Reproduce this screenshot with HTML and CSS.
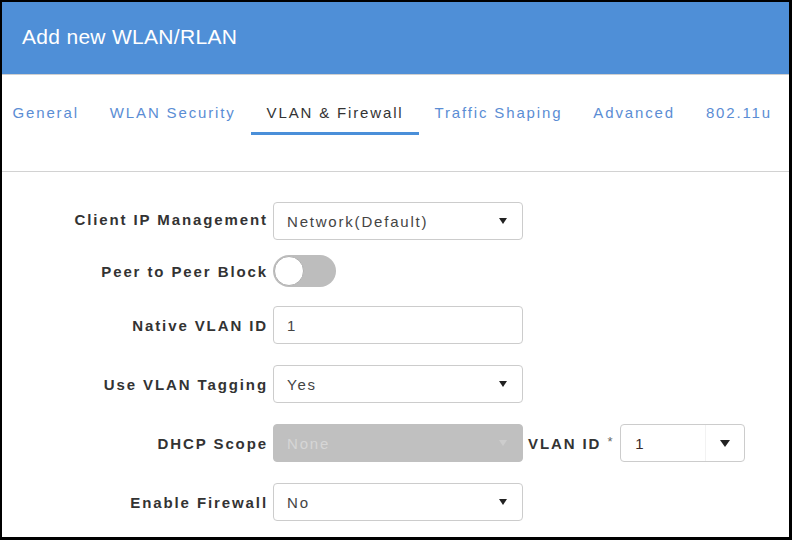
FILE: index.html
```html
<!DOCTYPE html>
<html lang="en">

<head>
    <meta charset="UTF-8" />
    <meta name="viewport" content="width=device-width, initial-scale=1" />
    <title>Add new WLAN/RLAN</title>
    <link rel="stylesheet" href="styles.css">
</head>

<body>
    <div class="dialog" role="dialog" aria-label="Add new WLAN/RLAN">
        <div class="dialog-header">
            <h2>Add new WLAN/RLAN</h2>
        </div>

        <nav class="tabs">
            <a href="#" class="tab">General</a>
            <a href="#" class="tab">WLAN Security</a>
            <a href="#" class="tab active">VLAN &amp; Firewall</a>
            <a href="#" class="tab">Traffic Shaping</a>
            <a href="#" class="tab">Advanced</a>
            <a href="#" class="tab">802.11u</a>
        </nav>

        <form class="form" onsubmit="return false">
            <div class="field field-first">
                <label class="field-label">Client IP Management</label>
                <div class="select">
                    <span>Network(Default)</span>
                    <svg class="caret" viewBox="0 0 8 6"><path d="M0 0h8L4 6z" /></svg>
                </div>
            </div>

            <div class="field field-toggle">
                <label class="field-label">Peer to Peer Block</label>
                <div class="toggle" role="switch" aria-checked="false" tabindex="0">
                    <span class="knob"></span>
                </div>
            </div>

            <div class="field">
                <label class="field-label">Native VLAN ID</label>
                <div class="input">1</div>
            </div>

            <div class="field">
                <label class="field-label">Use VLAN Tagging</label>
                <div class="select">
                    <span>Yes</span>
                    <svg class="caret" viewBox="0 0 8 6"><path d="M0 0h8L4 6z" /></svg>
                </div>
            </div>

            <div class="field">
                <label class="field-label">DHCP Scope</label>
                <div class="select disabled">
                    <span>None</span>
                    <svg class="caret" viewBox="0 0 8 6"><path d="M0 0h8L4 6z" /></svg>
                </div>
                <label class="inline-label">VLAN ID <sup>*</sup></label>
                <div class="combo">
                    <span class="combo-value">1</span>
                    <span class="combo-btn">
                        <svg class="caret caret-lg" viewBox="0 0 10 7"><path d="M0 0h10L5 7z" /></svg>
                    </span>
                </div>
            </div>

            <div class="field">
                <label class="field-label">Enable Firewall</label>
                <div class="select">
                    <span>No</span>
                    <svg class="caret" viewBox="0 0 8 6"><path d="M0 0h8L4 6z" /></svg>
                </div>
            </div>
        </form>
    </div>
</body>
</html>
```

FILE: styles.css
```css
* {
    box-sizing: border-box;
}

body {
    margin: 0;
    font-family: "Liberation Sans", Arial, sans-serif;
    background: #000;
}

.dialog {
    width: 792px;
    height: 540px;
    border: solid #000;
    border-width: 2px 3px 3px 2px;
    background: #fff;
    overflow: hidden;
}

.dialog-header {
    height: 73px;
    background-color: #4f8fd7;
    border-bottom: 1px solid #cfcfcf;
    padding: 0 20px;
}

.dialog-header h2 {
    margin: 0;
    color: #fff;
    font-weight: normal;
    font-size: 21px;
    letter-spacing: 0.3px;
    line-height: 70px;
}

/* tab strip */
.tabs {
    display: flex;
    margin-left: -5px;
    padding: 28px 0 36px;
    border-bottom: 1px solid #d2d2d2;
}

.tab {
    padding: 0 15.5px 9px 15.5px;
    border-bottom: 3px solid transparent;
    color: #5b8dd4;
    font-size: 15px;
    line-height: 20px;
    letter-spacing: 1.85px;
    text-decoration: none;
    white-space: nowrap;
}

.tab.active {
    color: #333;
    border-bottom-color: #4a8fd9;
}

/* form rows */
.form {
    padding-top: 30px;
}

.field {
    display: flex;
    align-items: center;
    gap: 5px;
    margin-bottom: 21px;
}

.field-first {
    margin-bottom: 15px;
}

.field-first .field-label {
    margin-top: -3px;
}

.field-toggle {
    margin-bottom: 19px;
}

.field-label,
.inline-label {
    color: #333;
    font-size: 15px;
    font-weight: bold;
    letter-spacing: 1.9px;
    white-space: nowrap;
}

.field-label {
    width: 266px;
    text-align: right;
}

.inline-label sup {
    font-weight: normal;
    color: #666;
    font-size: 13px;
    vertical-align: 3px;
}

.select,
.input {
    width: 250px;
    height: 38px;
    display: flex;
    align-items: center;
    justify-content: space-between;
    padding: 0 15px 0 13px;
    border: 1px solid #ccc;
    border-radius: 4px;
    color: #444;
    font-size: 15px;
    letter-spacing: 1.8px;
}

.caret {
    width: 8px;
    height: 6px;
    fill: #222;
}

.select.disabled {
    background: #c0c0c0;
    border-color: #c0c0c0;
    color: #d6d6d6;
}

.select.disabled .caret {
    fill: #cdcdcd;
}

.combo {
    display: flex;
    width: 125px;
    height: 38px;
    margin-left: 1px;
    border: 1px solid #ccc;
    border-radius: 4px;
    font-size: 15px;
    color: #3a2a2a;
}

.combo-value {
    flex: 1;
    display: flex;
    align-items: center;
    padding-left: 14px;
}

.combo-btn {
    width: 39px;
    display: flex;
    align-items: center;
    justify-content: center;
    border-left: 1px solid #f2f2f2;
}

.caret-lg {
    width: 10px;
    height: 7px;
}

/* switch */
.toggle {
    position: relative;
    width: 63px;
    height: 32px;
    border-radius: 16px;
    background: #bdbdbd;
    cursor: pointer;
}

.toggle .knob {
    position: absolute;
    left: 1px;
    top: 1px;
    width: 30px;
    height: 30px;
    border-radius: 50%;
    background: #fff;
    border: 1px solid #b0b0b0;
}
```
